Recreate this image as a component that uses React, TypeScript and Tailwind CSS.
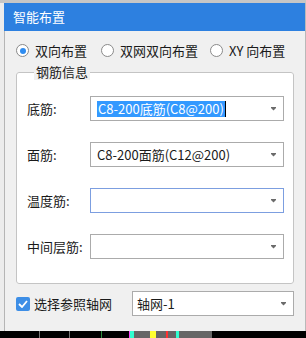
const font = { fontFamily: '"Noto Sans CJK SC", "Noto Sans", sans-serif' };

function Radio({ checked, label }: { checked?: boolean; label: string }) {
  return (
    <div className="flex items-center gap-[6px]">
      <span className="w-[13px] h-[13px] rounded-full border border-[#8a8a8a] bg-white flex items-center justify-center">
        {checked && <span className="w-[6px] h-[6px] rounded-full bg-[#2f8cf0]" />}
      </span>
      <span className="text-[13px] text-[#1a1a1a] leading-none">{label}</span>
    </div>
  );
}

function Arrow() {
  return (
    <svg width="5" height="4" viewBox="0 0 5 4" className="shrink-0">
      <rect x="0" y="0" width="5" height="1" fill="#6b6b6b" />
      <path d="M0 1 L5 1 L2.5 3.5 Z" fill="#6b6b6b" />
    </svg>
  );
}

function Select({ value, focused, selected }: { value?: string; focused?: boolean; selected?: boolean }) {
  return (
    <div
      className={
        "w-[194px] h-[25px] bg-white flex items-center justify-between pl-[6px] pr-[7px] border " +
        (focused ? "border-[#7c9ee0]" : "border-[#ababab]")
      }
    >
      {selected ? (
        <span className="flex items-center h-[16px]">
          <span className="bg-[#3399ff] text-white text-[13px] leading-[16px] px-[1px]">{value}</span>
          <span className="w-[1px] h-[16px] bg-black" />
        </span>
      ) : (
        <span className="text-[13px] text-[#1a1a1a] leading-none">{value}</span>
      )}
      <Arrow />
    </div>
  );
}

function Row({ label, children }: { label: string; children: React.ReactNode }) {
  return (
    <div className="flex items-center justify-between">
      <span className="text-[13px] text-[#1a1a1a] leading-none">{label}</span>
      {children}
    </div>
  );
}

export default function App() {
  return (
    <div className="w-[306px] h-[338px] flex flex-col bg-[#e9e9e9] overflow-hidden" style={font}>
      <div className="h-[3px] bg-[#c6c6c6]" />
      <div className="flex flex-1">
        <div className="w-[4px] bg-[#ececec]" />
        <div className="flex-1 flex flex-col border-r border-[#b9b9b9]">
          <div className="h-[28px] bg-[#2d80e0] flex items-center pl-[9px] text-white text-[13px]">智能布置</div>
          <div className="flex-1 bg-[#f0f0f0] border-l border-[#b5b5b5] pl-[11px] pr-[11px]">
            <div className="flex items-center h-[19px] mt-[10px]">
              <div className="w-[85px]"><Radio checked label="双向布置" /></div>
              <div className="w-[109px]"><Radio label="双网双向布置" /></div>
              <Radio label="XY 向布置" />
            </div>
            <fieldset className="mt-[4px] border border-[#c4c4c4] rounded-[3px] bg-white pl-[10px] pr-[9px] pt-[16px] pb-[24px] flex flex-col gap-[21px]">
              <legend className="ml-[7px] px-[2px] text-[13px] text-[#1a1a1a] leading-[16px] bg-[#f0f0f0]">钢筋信息</legend>
              <Row label="底筋:"><Select value="C8-200底筋(C8@200)" selected /></Row>
              <Row label="面筋:"><Select value="C8-200面筋(C12@200)" /></Row>
              <Row label="温度筋:"><Select focused /></Row>
              <Row label="中间层筋:"><Select /></Row>
            </fieldset>
            <div className="flex items-center justify-between mt-[7px]">
              <div className="flex items-center gap-[4px]">
                <span className="w-[14px] h-[14px] rounded-[2px] bg-[#3d8ee6] flex items-center justify-center">
                  <svg width="10" height="8" viewBox="0 0 10 8">
                    <path d="M1 4 L4 7 L9 1" stroke="white" strokeWidth="1.8" fill="none" />
                  </svg>
                </span>
                <span className="text-[13px] text-[#1a1a1a] leading-none">选择参照轴网</span>
              </div>
              <div className="w-[162px] h-[25px] bg-white border border-[#ababab] flex items-center justify-between pl-[4px] pr-[7px]">
                <span className="text-[13px] text-[#1a1a1a] leading-none">轴网-1</span>
                <Arrow />
              </div>
            </div>
          </div>
        </div>
      </div>
      <div className="h-[7px] bg-black flex items-end">
        <div className="w-[40px] h-full border-r border-[#777]" />
        <div className="w-[30px] h-full border-r border-[#777]" />
        <div className="w-[32px] h-full border-r border-[#2c8a3a]" />
        <div className="w-[28px] h-full border-r border-[#ff44ff]" />
        <div className="w-[82px] h-full bg-[#666] flex">
          <div className="w-[4px] bg-[#30ffd0]" />
          <div className="ml-[16px] w-[6px] bg-[#ffff30]" />
          <div className="ml-[10px] w-[2px] bg-[#ff3030]" />
          <div className="ml-[8px] w-[3px] bg-[#30ffd0]" />
        </div>
        <div className="flex-1 h-full" />
      </div>
    </div>
  );
}
